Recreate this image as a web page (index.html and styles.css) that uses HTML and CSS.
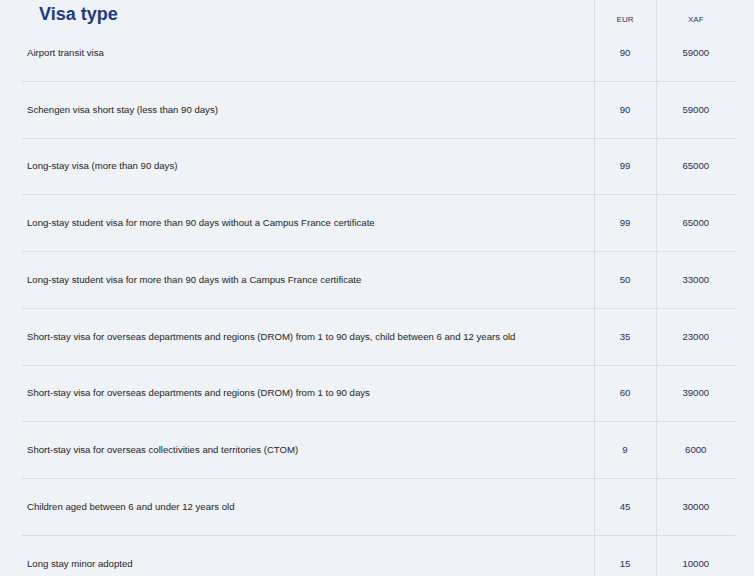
FILE: index.html
```html
<!DOCTYPE html>
<html lang="en">
<head>
<meta charset="utf-8">
<title>Visa fees</title>
<link rel="stylesheet" href="styles.css">
</head>
<body>
<div class="wrap">
<table class="fees">
  <colgroup>
    <col class="c-type">
    <col class="c-eur">
    <col class="c-xaf">
  </colgroup>
  <thead>
    <tr>
      <th class="title">Visa type</th>
      <th class="cur">EUR</th>
      <th class="cur">XAF</th>
    </tr>
  </thead>
  <tbody>
    <tr><td class="desc">Airport transit visa</td><td class="num">90</td><td class="num">59000</td></tr>
    <tr><td class="desc">Schengen visa short stay (less than 90 days)</td><td class="num">90</td><td class="num">59000</td></tr>
    <tr><td class="desc">Long-stay visa (more than 90 days)</td><td class="num">99</td><td class="num">65000</td></tr>
    <tr><td class="desc">Long-stay student visa for more than 90 days without a Campus France certificate</td><td class="num">99</td><td class="num">65000</td></tr>
    <tr><td class="desc">Long-stay student visa for more than 90 days with a Campus France certificate</td><td class="num">50</td><td class="num">33000</td></tr>
    <tr><td class="desc">Short-stay visa for overseas departments and regions (DROM) from 1 to 90 days, child between 6 and 12 years old</td><td class="num">35</td><td class="num">23000</td></tr>
    <tr><td class="desc">Short-stay visa for overseas departments and regions (DROM) from 1 to 90 days</td><td class="num">60</td><td class="num">39000</td></tr>
    <tr><td class="desc">Short-stay visa for overseas collectivities and territories (CTOM)</td><td class="num">9</td><td class="num">6000</td></tr>
    <tr><td class="desc">Children aged between 6 and under 12 years old</td><td class="num">45</td><td class="num">30000</td></tr>
    <tr><td class="desc">Long stay minor adopted</td><td class="num">15</td><td class="num">10000</td></tr>
  </tbody>
</table>
</div>
</body>
</html>
```

FILE: styles.css
```css
html, body {
  margin: 0;
  padding: 0;
  background: #eff2f6;
}

body {
  font-family: "Liberation Sans", Arial, sans-serif;
  color: #222;
  overflow: hidden;
}

.wrap {
  padding-left: 22px;
}

.fees {
  width: 713px;
  border-collapse: collapse;
  table-layout: fixed;
}

.c-type { width: 572px; }
.c-eur { width: 62px; }
.c-xaf { width: 79px; }

.fees .cell,
.fees th,
.fees td {
  padding: 0;
  box-sizing: border-box;
}

.fees thead tr {
  height: 24.5px;
}

.fees .title {
  text-align: left;
  vertical-align: top;
  padding: 4px 0 0 17px;
  font-size: 18px;
  line-height: 20px;
  font-weight: bold;
  color: #1c3a86;
}

.fees .cur {
  vertical-align: top;
  padding-top: 16px;
  font-size: 8px;
  line-height: 8px;
  font-weight: normal;
  color: #2b3466;
  border-left: 1px solid #d9dee5;
  text-align: center;
}

.fees tbody tr {
  height: 56.75px;
}

.fees tbody tr + tr td {
  border-top: 1px solid #d9dee5;
}

.fees .desc {
  padding-left: 5px;
  font-size: 9.6px;
  line-height: 12px;
  color: #1e1e1e;
  vertical-align: middle;
}

.fees .num {
  text-align: center;
  vertical-align: middle;
  font-size: 9.6px;
  line-height: 12px;
  color: #27305f;
  border-left: 1px solid #d9dee5;
}
```
